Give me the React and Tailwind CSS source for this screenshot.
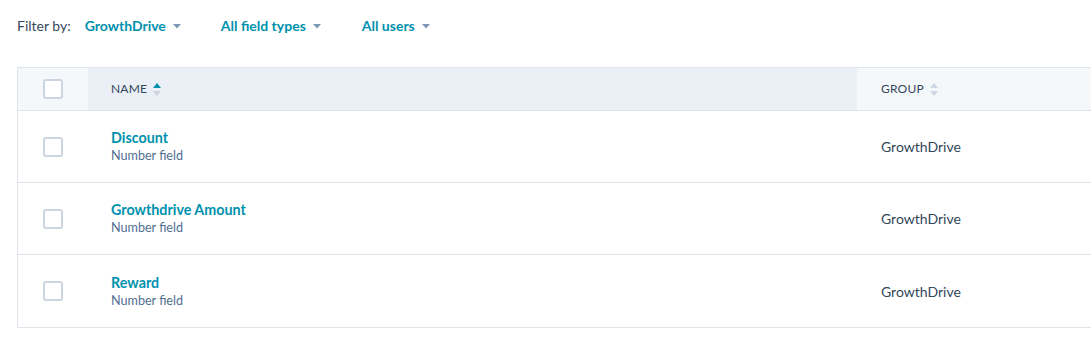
const rows = [
  { name: 'Discount', type: 'Number field', group: 'GrowthDrive' },
  { name: 'Growthdrive Amount', type: 'Number field', group: 'GrowthDrive' },
  { name: 'Reward', type: 'Number field', group: 'GrowthDrive' },
]

const Caret = () => (
  <svg className="ml-[7px] mt-[1px]" width="8" height="5" viewBox="0 0 8 5">
    <path d="M0 0h8L4 4.5z" fill="#7c98b6" />
  </svg>
)

const SortIcon = ({ active }) => (
  <svg className="ml-[6px]" width="8" height="13" viewBox="0 0 8 13">
    <path d="M4 0L8 5H0z" fill={active ? '#0091ae' : '#cbd6e2'} />
    <path d="M4 13L8 8H0z" fill="#cbd6e2" />
  </svg>
)

const Checkbox = () => (
  <div className="w-[20px] h-[20px] rounded-[3px] border-2 border-[#cbd6e2] bg-white" />
)

const Filter = ({ label }) => (
  <button className="flex items-center text-[14px] font-bold text-[#0091ae]">
    {label}
    <Caret />
  </button>
)

export default function App() {
  return (
    <div className="w-[1091px] h-[344px] bg-white overflow-hidden font-['Lato',sans-serif] text-[#33475b]">
      {/* Filters */}
      <div className="flex items-center h-[51px] pl-[17px] text-[14px]">
        <span className="text-[#33475b] mr-[14px]">Filter by:</span>
        <Filter label="GrowthDrive" />
        <div className="w-[40px]" />
        <Filter label="All field types" />
        <div className="w-[41px]" />
        <Filter label="All users" />
      </div>

      <div className="mt-[16px] ml-[17px] w-[1100px] border border-[#dfe3eb]">
        {/* Header */}
        <div className="flex h-[43px] border-b border-[#dfe3eb] text-[12px] uppercase tracking-[0.2px]">
          <div className="w-[70px] bg-[#f5f8fa] flex items-center justify-center">
            <Checkbox />
          </div>
          <div className="w-[769px] bg-[#eaf0f6] flex items-center pl-[23px]">
            NAME
            <SortIcon active />
          </div>
          <div className="flex-1 bg-[#f5f8fa] flex items-center pl-[24px]">
            GROUP
            <SortIcon />
          </div>
        </div>

        {rows.map((r, i) => (
          <div
            key={i}
            className={`flex h-[72px] ${i < rows.length - 1 ? 'border-b border-[#dfe3eb]' : ''}`}
          >
            <div className="w-[70px] flex items-center justify-center">
              <Checkbox />
            </div>
            <div className="w-[769px] flex flex-col justify-center pl-[23px]">
              <span className="text-[14.3px] font-bold text-[#0091ae] leading-[18px]">{r.name}</span>
              <span className="text-[12.6px] text-[#516f90] leading-[17px]">{r.type}</span>
            </div>
            <div className="flex-1 flex items-center pl-[24px] text-[14px]">{r.group}</div>
          </div>
        ))}
      </div>
    </div>
  )
}
